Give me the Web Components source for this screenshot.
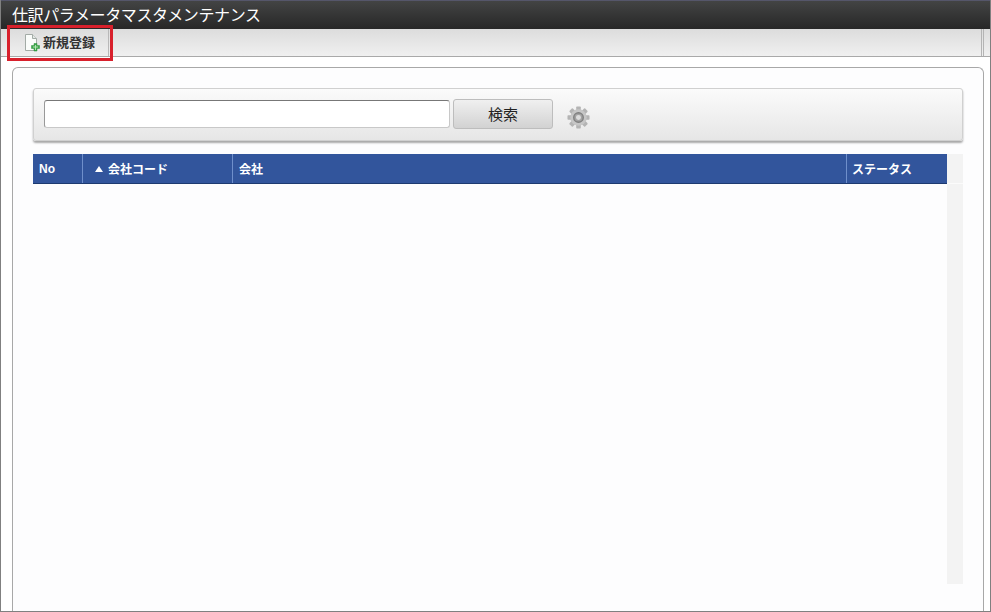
<!DOCTYPE html>
<html lang="ja">
<head>
<meta charset="utf-8">
<title>仕訳パラメータマスタメンテナンス</title>
<style>
    html, body { margin: 0; height: 100%; }
    body { font-family: "Liberation Sans", "Noto Sans CJK JP", sans-serif; overflow: hidden; }
</style>
</head>
<body>
<app-page>
    <title-bar slot="title">仕訳パラメータマスタメンテナンス</title-bar>
    <tool-bar slot="tools">
        <tool-button>新規登録</tool-button>
    </tool-bar>
    <search-box></search-box>
    <data-grid></data-grid>
</app-page>

<script>
function define(name, css, html) {
    customElements.define(name, class extends HTMLElement {
        constructor() {
            super()
            this.attachShadow({ mode: 'open' })
            this.shadowRoot.innerHTML = `<style>${css}</style>${html}`
        }
    })
}

define('app-page', `
    :host {
        display: flex;
        flex-direction: column;
        box-sizing: border-box;
        width: 991px;
        height: 612px;
        border-left: 1px solid #808080;
        border-right: 1px solid #808080;
        border-bottom: 1px solid #808080;
        background: #fff;
        position: relative;
    }
    .content { flex: 1; display: flex; padding: 10px 6px 0 11px; min-height: 0; }
    .panel {
        flex: 1;
        box-sizing: border-box;
        border: 1px solid #a8a8a8;
        border-bottom: 0;
        border-radius: 6px 6px 0 0;
        background: #fdfdfe;
        padding: 20px 20px 0 20px;
    }
    /* the red annotation drawn over the screenshot */
    .mark {
        position: absolute;
        left: 6px;
        top: 25px;
        width: 100px;
        height: 30px;
        border: 3px solid #d8202c;
    }
`, `
    <slot name="title"></slot>
    <slot name="tools"></slot>
    <div class="content"><div class="panel"><slot></slot></div></div>
    <div class="mark"></div>
`)

define('title-bar', `
    :host {
        display: block;
        box-sizing: border-box;
        height: 29px;
        padding: 4px 0 0 11px;
        color: #fff;
        font-size: 16px;
        letter-spacing: -0.38px;
        line-height: 22px;
        white-space: nowrap;
        border-top: 1px solid #55566a;
        background: linear-gradient(#434444, #272727);
    }
`, `<slot></slot>`)

define('tool-bar', `
    :host {
        display: flex;
        justify-content: space-between;
        box-sizing: border-box;
        height: 28px;
        border-bottom: 1px solid #a9a9a9;
        background: linear-gradient(#dcdcdc, #f0f0f0);
    }
    .end { box-sizing: border-box; width: 3px; margin-right: 6px; border-left: 1px solid #b4b4b4; border-right: 1px solid #b4b4b4; }
`, `<slot></slot><div class="end"></div>`)

define('tool-button', `
    :host {
        display: flex;
        align-items: center;
        gap: 3px;
        box-sizing: border-box;
        width: 100px;
        margin-left: 8px;
        padding: 0 0 2px 14px;
        font-size: 13px;
        font-weight: bold;
        color: #333;
        white-space: nowrap;
        border-left: 1px solid #c8c8c8;
        border-right: 1px solid #b8b8b8;
    }
    svg { flex: none; margin-top: 3px; }
`, `
    <svg width="16" height="18" viewBox="0 0 16 18">
        <path d="M1.5 .5H8.5L12.5 4.5V16.5H1.5Z" fill="#fafcfa" stroke="#a3aba6"/>
        <path d="M8.5 .5V4.5H12.5" fill="#e3e8e5" stroke="#a3aba6"/>
        <path d="M10 9.5H13V11.5H15.5V14.5H13V17H10V14.5H7.5V11.5H10Z" fill="#3fa84a" stroke="#2b8a3a" stroke-width=".5"/>
        <path d="M11.5 11V16M9 13H14" stroke="#c9efc9" stroke-width=".8"/>
    </svg>
    <slot></slot>
`)

define('search-box', `
    :host {
        display: flex;
        align-items: center;
        box-sizing: border-box;
        height: 53px;
        padding: 0 0 0 10px;
        border: 1px solid #d0d0d0;
        border-radius: 3px;
        background: linear-gradient(#fbfbfb, #e6e6e6);
        box-shadow: 0 2px 2px #a8a8a8;
    }
    input {
        box-sizing: border-box;
        width: 406px;
        height: 28px;
        margin: 0 3px 2px 0;
        padding: 0 4px;
        border: 1px solid #c8c8c8;
        border-top-color: #777;
        border-left-color: #999;
        border-radius: 3px;
        background: #fff;
        outline: none;
    }
    button {
        box-sizing: border-box;
        width: 100px;
        height: 30px;
        margin: 0 14px 2px 0;
        padding: 0;
        border: 1px solid #bdbdbd;
        border-radius: 3px;
        background: linear-gradient(#f0f0f0, #d2d2d2);
        font: 15px "Liberation Sans", "Noto Sans CJK JP", sans-serif;
        color: #222;
    }
    svg { display: block; margin-top: 6px; }
`, `
    <input type="text">
    <button type="button">検索</button>
    <svg width="23" height="23" viewBox="-12 -12 24 24">
        <g fill="#b4b4b4">
            <rect x="-2.4" y="-11.5" width="4.8" height="23" rx=".8"/>
            <rect x="-2.4" y="-11.5" width="4.8" height="23" rx=".8" transform="rotate(45)"/>
            <rect x="-2.4" y="-11.5" width="4.8" height="23" rx=".8" transform="rotate(90)"/>
            <rect x="-2.4" y="-11.5" width="4.8" height="23" rx=".8" transform="rotate(135)"/>
        </g>
        <circle r="8.6" fill="#c6c6c6"/>
        <circle r="5" fill="#a2a2a2" stroke="#7f7f7f" stroke-width="1.4"/>
        <circle r="2.6" fill="#dcdcdc"/>
    </svg>
`)

define('data-grid', `
    :host {
        display: grid;
        grid-template-columns: 914px 16px;
        grid-template-rows: 30px 400px;
        margin-top: 13px;
        color: #fff;
        font-size: 12px;
        font-weight: bold;
    }
    .head {
        display: grid;
        grid-template-columns: 50px 150px 614px 100px;
        background: #32559c;
        border-bottom: 1px solid #1d3a70;
        box-sizing: border-box;
    }
    .head div {
        display: flex;
        align-items: center;
        gap: 5px;
        padding-left: 6px;
        box-sizing: border-box;
        border-right: 1px solid #6f8fcb;
        white-space: nowrap;
    }
    .head div:last-child { border-right: 0; padding-left: 5px; }
    .head .sort { padding-left: 12px; }
    .arrow { width: 0; height: 0; border: 4px solid transparent; border-top: 0; border-bottom: 6px solid #fff; }
    .bar-top { background: #f3f3f3; border-bottom: 1px solid #fbfbfb; }
    .rows { grid-column: 1; }
    .bar { background: #f3f3f3; }
`, `
    <div class="head">
        <div>No</div>
        <div class="sort"><span class="arrow"></span>会社コード</div>
        <div>会社</div>
        <div>ステータス</div>
    </div>
    <div class="bar-top"></div>
    <div class="rows"></div>
    <div class="bar"></div>
`)
</script>
</body>
</html>
